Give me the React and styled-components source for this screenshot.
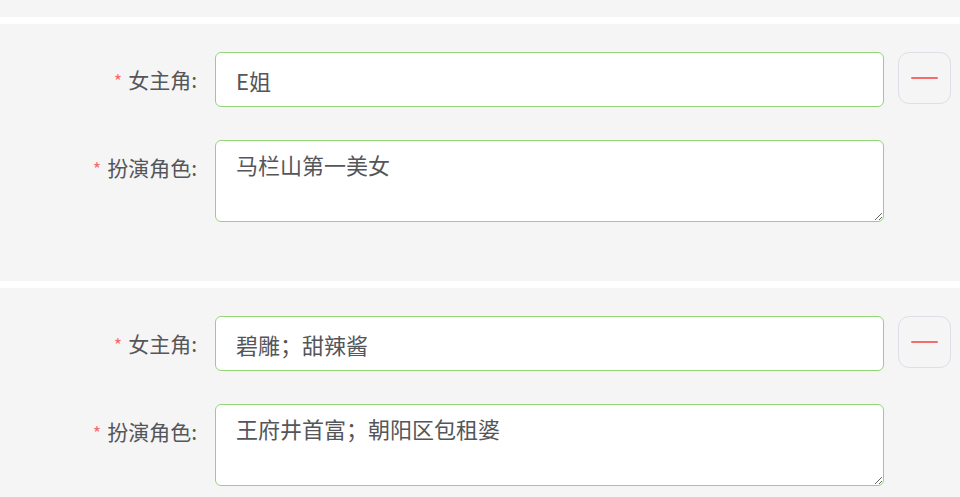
import React, { useState } from 'react';
import styled, { createGlobalStyle } from 'styled-components';

const GlobalStyle = createGlobalStyle`
    html, body {
        margin: 0;
        padding: 0;
        background: #ffffff;
        font-family: "Noto Sans CJK SC", "Noto Sans", sans-serif;
    }
`;

const Page = styled.div`
    display: flex;
    flex-direction: column;
    gap: 7px;
    background: #ffffff;
`;

const TopStrip = styled.div`
    height: 17px;
    background: #f5f5f5;
`;

const Card = styled.div`
    background: #f5f5f5;
    padding: 28px 0 59px;
    display: flex;
    flex-direction: column;
    gap: 33px;
`;

const FormItem = styled.div`
    display: flex;
    align-items: flex-start;
`;

const Label = styled.label`
    width: 197px;
    flex-shrink: 0;
    text-align: right;
    line-height: 55px;
    height: 55px;
    font-size: 21px;
    color: #54565a;
    margin-right: 18px;

    &::before {
        content: "*";
        color: #f56c6c;
        margin-right: 6px;
        font-size: 18px;
    }
`;

const fieldCss = `
    box-sizing: border-box;
    width: 669px;
    margin: 0;
    border: 1px solid #95d475;
    border-radius: 6px;
    background: #ffffff;
    color: #54565a;
    font-family: "Noto Sans CJK SC", "Noto Sans", sans-serif;
    font-size: 22px;
    outline: none;
`;

const TextInput = styled.input`
    ${fieldCss}
    height: 55px;
    padding: 0 20px;
`;

const TextArea = styled.textarea`
    ${fieldCss}
    height: 82px;
    padding: 7px 20px;
    line-height: 1.5;
    resize: vertical;
    display: block;
`;

const RemoveButton = styled.button`
    box-sizing: border-box;
    width: 53px;
    height: 52px;
    margin-left: 14px;
    border: 1px solid #dcdfe6;
    border-radius: 11px;
    background: #f5f5f5;
    display: flex;
    align-items: center;
    justify-content: center;
    padding: 0;
    cursor: pointer;

    span {
        display: block;
        width: 27px;
        height: 2px;
        background: #f56c6c;
        border-radius: 1px;
    }
`;

const initial = [
    { heroine: 'E姐', role: '马栏山第一美女' },
    { heroine: '碧雕；甜辣酱', role: '王府井首富；朝阳区包租婆' },
];

function App() {
    const [rows, setRows] = useState(initial);

    const update = (i, key, value) => {
        setRows(rows.map((r, idx) => (idx === i ? { ...r, [key]: value } : r)));
    };

    return (
        <>
            <GlobalStyle />
            <Page>
                <TopStrip />
                {rows.map((row, i) => (
                    <Card key={i}>
                        <FormItem>
                            <Label>女主角:</Label>
                            <TextInput value={row.heroine} onChange={e => update(i, 'heroine', e.target.value)} />
                            <RemoveButton onClick={() => setRows(rows.filter((_, idx) => idx !== i))}>
                                <span />
                            </RemoveButton>
                        </FormItem>
                        <FormItem>
                            <Label>扮演角色:</Label>
                            <TextArea value={row.role} onChange={e => update(i, 'role', e.target.value)} />
                        </FormItem>
                    </Card>
                ))}
            </Page>
        </>
    );
}

export default App;
